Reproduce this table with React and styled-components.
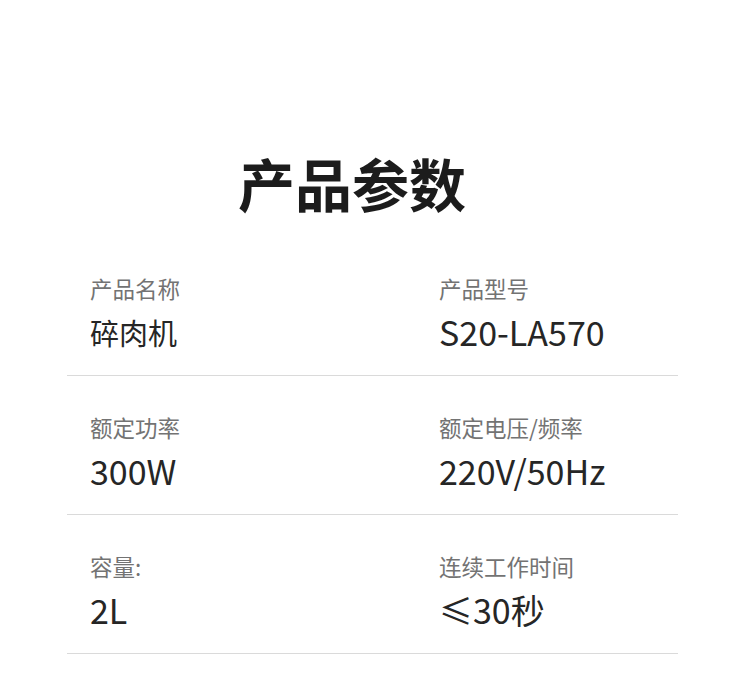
import React from 'react';
import styled, { createGlobalStyle } from 'styled-components';

const GlobalStyle = createGlobalStyle`
  body {
    margin: 0;
    background: #fff;
    font-family: "Noto Sans CJK SC", "Noto Sans", sans-serif;
  }
`;

const specs = [
  { label: '产品名称', value: '碎肉机', cjk: true },
  { label: '产品型号', value: 'S20-LA570' },
  { label: '额定功率', value: '300W' },
  { label: '额定电压/频率', value: '220V/50Hz' },
  { label: '容量:', value: '2L' },
  { label: '连续工作时间', value: '≤30秒' },
];

const App = () => {
  const rows = [];
  for (let i = 0; i < specs.length; i += 2) {
    rows.push(specs.slice(i, i + 2));
  }

  return (
    <Page>
      <GlobalStyle />
      <Title>产品参数</Title>
      <Table>
        {rows.map((row, i) => (
          <Row key={i}>
            {row.map((item) => (
              <Cell key={item.label}>
                <Label>{item.label}</Label>
                <Value $cjk={item.cjk}>{item.value}</Value>
              </Cell>
            ))}
          </Row>
        ))}
      </Table>
    </Page>
  );
};

const Page = styled.div`
  width: 750px;
  height: 689px;
  background: #fff;
  overflow: hidden;
`;

const Title = styled.h1`
  margin: 0;
  padding: 154px 46px 0 0;
  text-align: center;
  font-size: 57px;
  line-height: 57px;
  font-weight: 700;
  color: #1c1c1c;
`;

const Table = styled.div`
  margin: 26px 72px 0 67px;
`;

const Row = styled.div`
  display: grid;
  grid-template-columns: 372px 1fr;
  height: 139px;
  border-bottom: 1px solid #dadada;
  box-sizing: border-box;
`;

const Cell = styled.div`
  display: flex;
  flex-direction: column;
  padding: 40px 0 0 23px;
  &:nth-child(2) {
    padding-left: 0;
  }
`;

const Label = styled.div`
  font-size: 22.5px;
  line-height: 22px;
  color: #737373;
`;

const Value = styled.div`
  margin-top: 16px;
  font-size: ${(p) => (p.$cjk ? '29px' : '34px')};
  line-height: 34px;
  color: #262626;
`;

export default App;
